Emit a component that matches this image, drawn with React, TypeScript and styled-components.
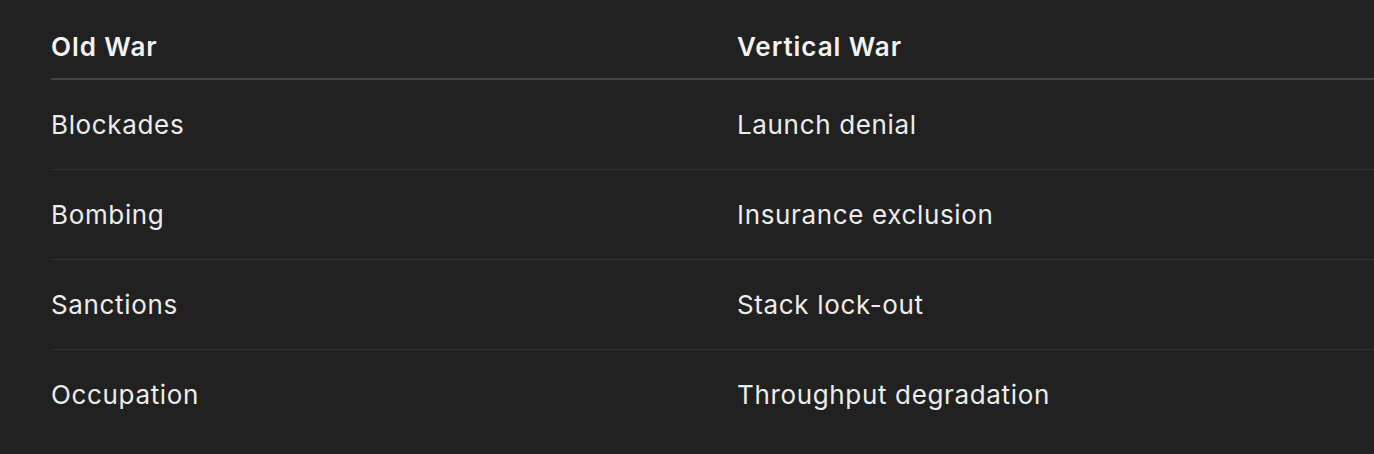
import React from "react";
import styled, { createGlobalStyle } from "styled-components";

const Global = createGlobalStyle`
  html, body {
    margin: 0;
    padding: 0;
    background: #212121;
    overflow: hidden;
  }
  body {
    font-family: Inter, "Noto Sans", sans-serif;
    color: #ececec;
  }
`;

const Page = styled.div`
  width: 1374px;
  height: 454px;
  padding: 14px 0 0 51px;
  box-sizing: border-box;
  overflow: hidden;
`;

const Table = styled.table`
  border-collapse: collapse;
  width: 1372px;
  table-layout: fixed;
`;

const HeadCell = styled.th`
  text-align: left;
  font-weight: 600;
  font-size: 26px;
  letter-spacing: 0.95px;
  height: 64px;
  padding: 0;
  vertical-align: middle;
  border-bottom: 2px solid #444444;
  color: #f2f2f2;
`;

const Row = styled.tr<{ $last?: boolean }>`
  border-bottom: ${(p) => (p.$last ? "none" : "1.5px solid #303030")};
`;

const Cell = styled.td`
  font-size: 26px;
  font-weight: 400;
  letter-spacing: 0.65px;
  height: 89px;
  padding: 0;
  vertical-align: middle;
  color: #ececec;
`;

const rows: [string, string][] = [
  ["Blockades", "Launch denial"],
  ["Bombing", "Insurance exclusion"],
  ["Sanctions", "Stack lock-out"],
  ["Occupation", "Throughput degradation"],
];

export default function App() {
  return (
    <>
      <Global />
      <Page>
        <Table>
          <colgroup>
            <col style={{ width: 686 }} />
            <col style={{ width: 686 }} />
          </colgroup>
          <thead>
            <tr>
              <HeadCell>Old War</HeadCell>
              <HeadCell>Vertical War</HeadCell>
            </tr>
          </thead>
          <tbody>
            {rows.map(([a, b], i) => (
              <Row key={a} $last={i === rows.length - 1}>
                <Cell>{a}</Cell>
                <Cell>{b}</Cell>
              </Row>
            ))}
          </tbody>
        </Table>
      </Page>
    </>
  );
}
